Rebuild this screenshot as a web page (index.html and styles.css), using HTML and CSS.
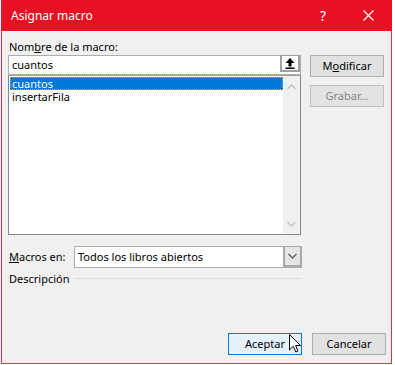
FILE: index.html
```html
<!DOCTYPE html>
<html lang="es">
<head>
<meta charset="utf-8">
<link rel="stylesheet" href="styles.css">
</head>
<body>
<div class="dialog">
  <div class="titlebar">
    <span class="title">Asignar macro</span>
    <span class="help">?</span>
    <svg class="close" width="11" height="11" viewBox="0 0 11 11"><path d="M0.5 0.5L10.5 10.5M10.5 0.5L0.5 10.5" stroke="#fff" stroke-width="1.2" fill="none"/></svg>
  </div>
  <div class="content">
    <div class="top">
      <div class="leftcol">
        <div class="label">Nom<u>b</u>re de la macro:</div>
        <div class="input">
          <span class="input-text">cuantos</span>
          <span class="upbtn">
            <svg width="10" height="11" viewBox="0 0 10 11"><path d="M5 0L9.5 5H6.5V8.5H3.5V5H0.5Z" fill="#000"/><rect x="0.5" y="9.5" width="9" height="1.5" fill="#000"/></svg>
          </span>
        </div>
        <div class="list">
          <div class="items">
            <div class="item selected">cuantos</div>
            <div class="item">insertarFila</div>
          </div>
          <div class="scroll">
            <svg width="9" height="6" viewBox="0 0 9 6"><path d="M0.5 5L4.5 1L8.5 5" stroke="#c4c4c4" stroke-width="1.6" fill="none"/></svg>
            <svg width="9" height="6" viewBox="0 0 9 6"><path d="M0.5 1L4.5 5L8.5 1" stroke="#c4c4c4" stroke-width="1.6" fill="none"/></svg>
          </div>
        </div>
      </div>
      <div class="rightcol">
        <div class="btn">M<u>o</u>dificar</div>
        <div class="btn disabled">Grabar...</div>
      </div>
    </div>
    <div class="macros-row">
      <div class="row-label"><u>M</u>acros en:</div>
      <div class="combo">
        <span class="combo-text">Todos los libros abiertos</span>
        <span class="dropbtn">
          <svg width="9" height="6" viewBox="0 0 9 6"><path d="M0.5 1L4.5 5L8.5 1" stroke="#555" stroke-width="1.2" fill="none"/></svg>
        </span>
      </div>
    </div>
    <div class="desc-row">
      <div class="row-label">Descripción</div>
      <div class="desc-line"></div>
    </div>
    <div class="footer">
      <div class="btn default">Aceptar</div>
      <div class="btn">Cancelar</div>
    </div>
  </div>
  <svg class="cursor" width="12" height="19" viewBox="0 0 12 19"><path d="M0.5 0.5V16L4.3 12.3L6.8 18L9 17L6.6 11.5H11.5Z" fill="#fff" stroke="#000" stroke-width="1"/></svg>
</div>
</body>
</html>
```

FILE: styles.css
```css
html, body {
  margin: 0;
  padding: 0;
  background: #ffffff;
}
body {
  width: 395px;
  height: 365px;
  overflow: hidden;
  font-family: "Noto Sans", "Open Sans", sans-serif;
  font-size: 11px;
  color: #000;
}
.dialog {
  position: relative;
  margin-left: 1px;
  width: 389px;
  height: 363px;
  border: 1px solid #e0323f;
  border-top: none;
  background: #f0f0f0;
  display: flex;
  flex-direction: column;
}
.titlebar {
  height: 31px;
  margin: 0 -1px;
  background: #e81123;
  color: #fff;
  display: flex;
  align-items: center;
  padding-left: 10px;
  padding-right: 18px;
}
.title {
  flex: 1;
  font-size: 12px;
  line-height: 16px;
}
.help {
  margin-right: 37px;
  font-size: 14px;
  line-height: 16px;
}
.close {
  display: block;
}
.content {
  flex: 1;
  display: flex;
  flex-direction: column;
  padding: 8px 5px 8px 6px;
}
.top {
  display: flex;
  gap: 9px;
}
.leftcol {
  width: 293px;
}
.label {
  height: 16px;
  line-height: 15px;
  padding-left: 1px;
}
.input {
  height: 18px;
  border: 1px solid #abadb3;
  background: #fff;
  display: flex;
  align-items: center;
}
.input-text {
  flex: 1;
  padding-left: 3px;
  line-height: 16px;
}
.upbtn {
  width: 16px;
  height: 14px;
  border: 2px solid #a0a0a0;
  border-top-width: 1px;
  margin-top: -1px;
  background: #fff;
  display: flex;
  align-items: center;
  justify-content: center;
  align-self: flex-start;
}
.list {
  height: 158px;
  border: 1px solid #828790;
  border-top-color: #a0a0a0;
  background: #fff;
  display: flex;
}
.items {
  flex: 1;
  padding: 1px 0 0 1px;
}
.item {
  height: 13px;
  line-height: 13px;
  padding-left: 2px;
}
.item.selected {
  background: #0078d7;
  color: #fff;
  outline: 1px dotted #ff9a1a;
  outline-offset: -1px;
}
.scroll {
  width: 17px;
  background: #f0f0f0;
  display: flex;
  flex-direction: column;
  justify-content: space-between;
  align-items: center;
  padding: 8px 0 7px;
}
.scroll svg {
  display: block;
}
.rightcol {
  width: 74px;
  padding-top: 16px;
  display: flex;
  flex-direction: column;
  gap: 8px;
}
.btn {
  width: 72px;
  height: 20px;
  border: 1px solid #adadad;
  background: #e1e1e1;
  display: flex;
  align-items: center;
  justify-content: center;
  line-height: 16px;
}
.btn.disabled {
  color: #838383;
  border-color: #bfbfbf;
  background: #e3e3e3;
}
.btn.default {
  border-color: #0078d7;
  background: #e5f1fb;
}
.macros-row {
  display: flex;
  margin-top: 11px;
  align-items: center;
}
.row-label {
  width: 65px;
  padding-left: 1px;
  line-height: 16px;
}
.combo {
  width: 226px;
  height: 20px;
  border: 1px solid #abadb3;
  background: #fff;
  display: flex;
  align-items: center;
}
.combo-text {
  flex: 1;
  padding-left: 3px;
  line-height: 16px;
}
.dropbtn {
  width: 15px;
  height: 18px;
  margin-right: -1px;
  border: 2px solid #a8a8a8;
  border-top-width: 1px;
  background: #e5e5e5;
  display: flex;
  align-items: center;
  justify-content: center;
  align-self: flex-start;
  margin-top: -1px;
}
.desc-row {
  display: flex;
  align-items: center;
  margin-top: 2px;
  height: 18px;
}
.desc-line {
  width: 228px;
  height: 1px;
  background: #dcdcdc;
  margin-top: -2px;
}
.footer {
  margin-top: auto;
  display: flex;
  justify-content: flex-end;
  gap: 10px;
}
.cursor {
  position: absolute;
  left: 287px;
  top: 334px;
}
```
